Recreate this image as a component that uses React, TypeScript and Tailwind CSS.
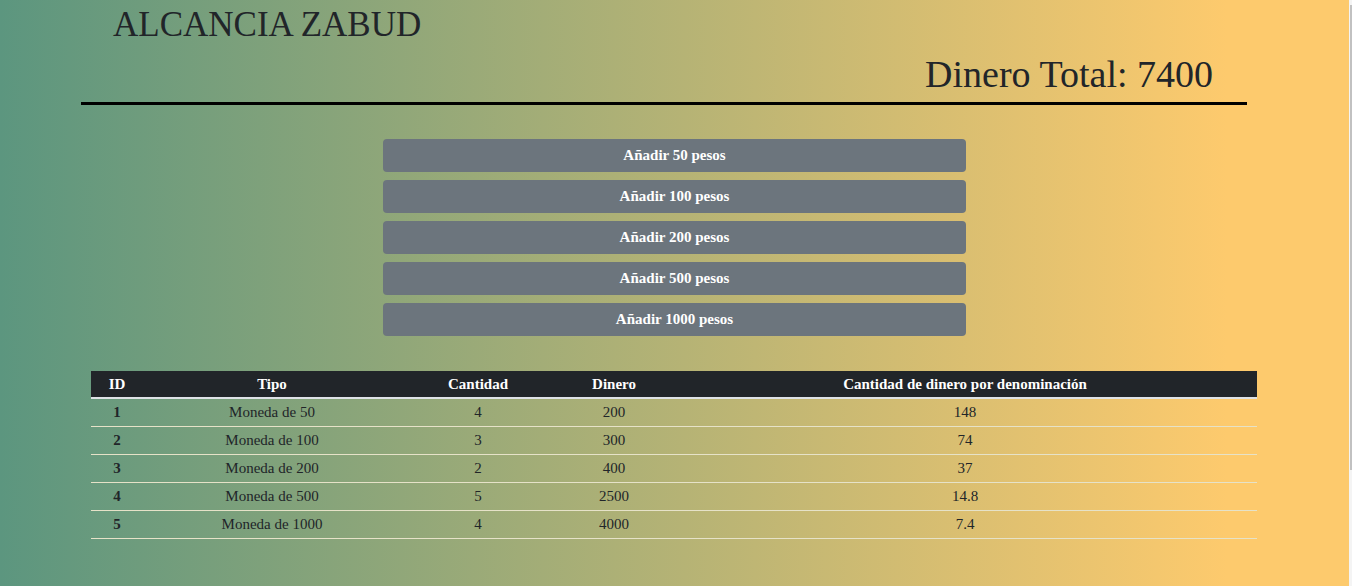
import React from "react";

const buttons = [50, 100, 200, 500, 1000];

const rows = [
  { id: 1, tipo: "Moneda de 50", cantidad: 4, dinero: 200, denom: "148" },
  { id: 2, tipo: "Moneda de 100", cantidad: 3, dinero: 300, denom: "74" },
  { id: 3, tipo: "Moneda de 200", cantidad: 2, dinero: 400, denom: "37" },
  { id: 4, tipo: "Moneda de 500", cantidad: 5, dinero: 2500, denom: "14.8" },
  { id: 5, tipo: "Moneda de 1000", cantidad: 4, dinero: 4000, denom: "7.4" },
];

export default function App() {
  return (
    <div className="flex h-[586px] w-full font-['Liberation_Serif',serif] text-[#212529]">
      <div className="flex-1 bg-[linear-gradient(to_right,#5c967f,#fdca6d_91%)]">
        {/* Encabezado */}
        <header className="ml-[81px] w-[1166px] border-b-[3px] border-black">
          <h1 className="pl-[32px] pt-[5px] text-[35px] leading-[40px]">ALCANCIA ZABUD</h1>
          <h2 className="pr-[34px] pt-[8px] pb-[6px] text-right text-[38px] leading-[43px]">
            Dinero Total: 7400
          </h2>
        </header>

        {/* Botones */}
        <div className="mx-auto mt-[34px] flex w-[583px] flex-col gap-[8px]">
          {buttons.map((b) => (
            <button
              key={b}
              className="h-[33px] w-full rounded-[4px] bg-[#6c757d] text-[15px] font-bold text-white"
            >
              Añadir {b} pesos
            </button>
          ))}
        </div>

        {/* Tabla */}
        <table className="ml-[91px] mt-[35px] w-[1166px] table-fixed border-collapse text-center text-[15px]">
          <colgroup>
            <col className="w-[52px]" />
            <col className="w-[258px]" />
            <col className="w-[154px]" />
            <col className="w-[118px]" />
            <col />
          </colgroup>
          <thead>
            <tr className="h-[27px] border-b-2 border-[#dee2e6] bg-[#212529] text-[15px] text-white">
              <th className="font-bold">ID</th>
              <th className="font-bold">Tipo</th>
              <th className="font-bold">Cantidad</th>
              <th className="font-bold">Dinero</th>
              <th className="font-bold">Cantidad de dinero por denominación</th>
            </tr>
          </thead>
          <tbody>
            {rows.map((r) => (
              <tr key={r.id} className="h-[28px] border-b border-[#e6e2c8]">
                <td className="font-bold">{r.id}</td>
                <td>{r.tipo}</td>
                <td>{r.cantidad}</td>
                <td>{r.dinero}</td>
                <td>{r.denom}</td>
              </tr>
            ))}
          </tbody>
        </table>
      </div>

      {/* barra de desplazamiento */}
      <div className="w-[3px] bg-[#f4f4f4] pt-[5px]">
        <div className="ml-[1px] h-[465px] w-[2px] bg-[#c1c1c1]" />
      </div>
    </div>
  );
}
